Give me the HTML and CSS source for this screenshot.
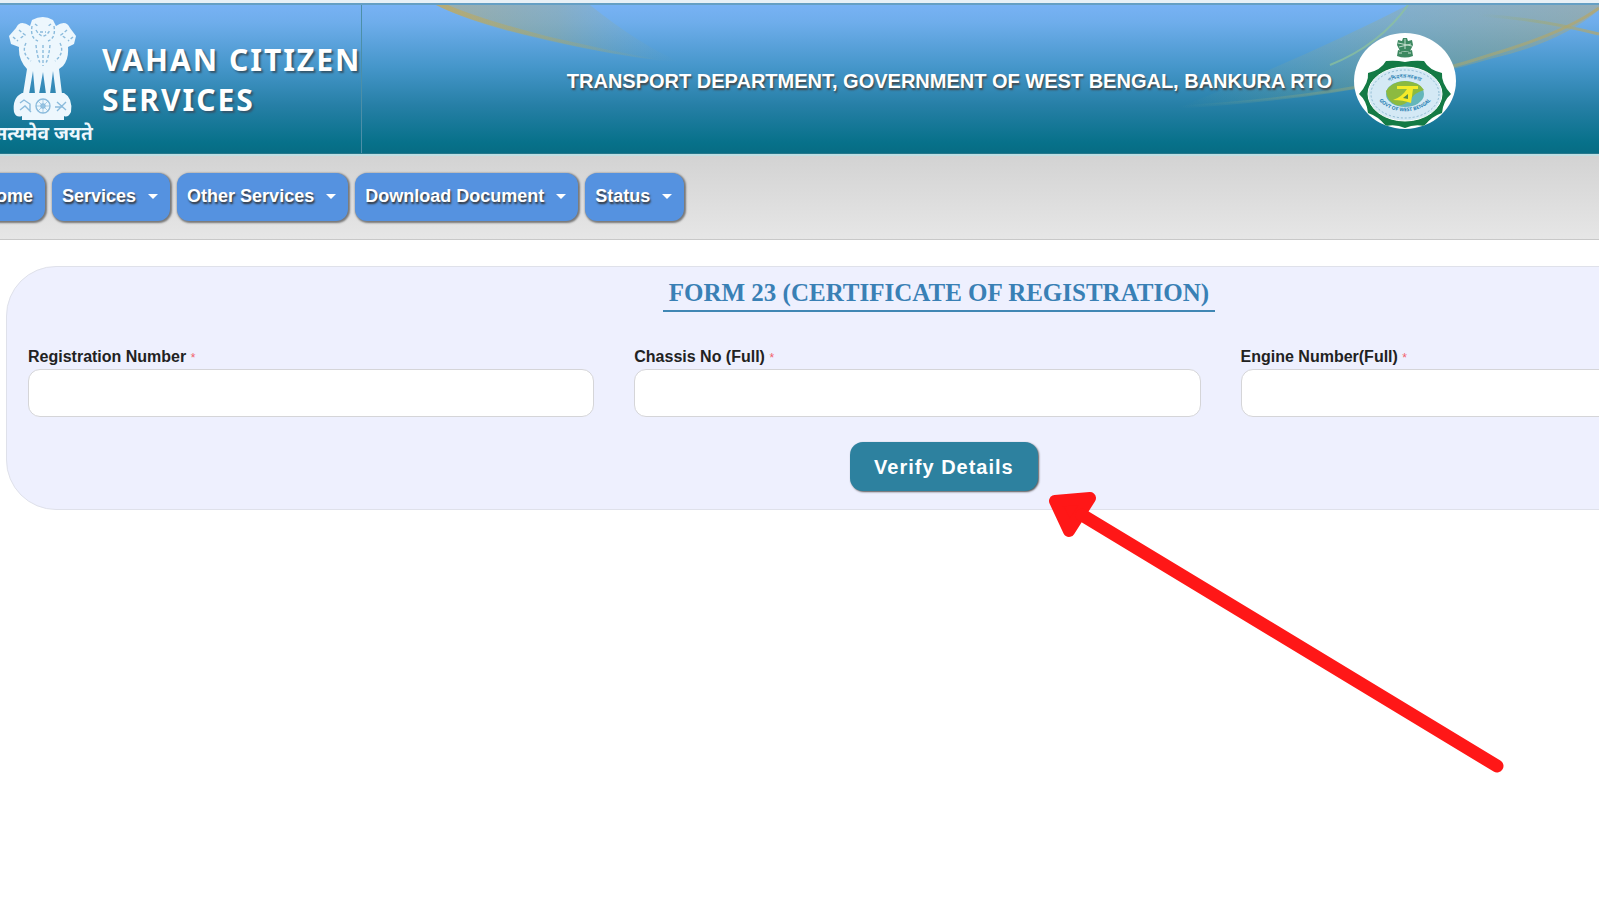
FILE: index.html
```html
<!DOCTYPE html>
<html lang="en">
<head>
<meta charset="utf-8">
<title>Vahan Citizen Services</title>
<link rel="stylesheet" href="styles.css">
</head>
<body>
<header class="banner">
  <svg class="swoosh swoosh-left" width="320" height="80" viewBox="0 0 320 80" aria-hidden="true">
    <defs>
      <linearGradient id="fadeLeft" x1="0" y1="0" x2="1" y2="0">
        <stop offset="0" stop-color="#c9a94f" stop-opacity=".6"/>
        <stop offset=".5" stop-color="#b0a860" stop-opacity=".4"/>
        <stop offset="1" stop-color="#8aa890" stop-opacity="0"/>
      </linearGradient>
    </defs>
    <path d="M16 0 Q56 20 130 36 Q200 52 260 57 Q220 40 170 0Z" fill="url(#fadeLeft)" opacity=".75"/>
    <path d="M16 0 Q50 17 120 33 Q190 50 250 57 Q190 46 130 32 Q60 14 28 0Z" fill="url(#fadeLeft)"/>
  </svg>
  <svg class="swoosh swoosh-right" width="419" height="110" viewBox="0 0 419 110" aria-hidden="true">
    <defs>
      <linearGradient id="fadeRight" x1="0" y1="0" x2="1" y2="0">
        <stop offset="0" stop-color="#8aae8c" stop-opacity="0"/>
        <stop offset=".45" stop-color="#a0aa70" stop-opacity=".45"/>
        <stop offset="1" stop-color="#b8a666" stop-opacity=".7"/>
      </linearGradient>
    </defs>
    <path d="M0 102 Q130 50 228 0 L419 0 V5 Q380 38 310 54 Q190 90 0 102Z" fill="url(#fadeRight)" opacity=".6"/>
    <path d="M0 102 Q190 90 310 50 Q385 28 419 3" fill="none" stroke="url(#fadeRight)" stroke-width="3"/>
    <path d="M150 60 Q200 40 228 0" fill="none" stroke="#8fc39a" stroke-width="2" opacity=".7"/>
    <path d="M300 10 Q360 14 419 29" fill="none" stroke="url(#fadeRight)" stroke-width="3"/>
  </svg>

  <div class="brand">
    <div class="emblem">
      <svg width="70" height="106" viewBox="0 0 70 106" role="img" aria-label="State Emblem of India">
        <g fill="#edf7fd">
          <path d="M24 4 Q35-2 45 4 L48 10 Q58 3 62 12 L68 20 L66 28 L60 31 Q61 43 55 50 L51 53 L54 78 H48 L45 55 L42 78 H38 L35 56 L31 78 H27 L25 55 L21 78 H15 L19 53 Q10 43 11 31 L3 28 L1 20 L8 12 Q12 3 22 10Z"/>
          <path d="M14 77 H56 Q65 82 63 96 Q60 102 56 100 V104 H14 V100 Q8 102 6 96 Q4 82 14 77Z"/>
        </g>
        <g fill="none" stroke="#8bbbdc" stroke-width="1.4">
          <circle cx="35" cy="90" r="7"/><circle cx="35" cy="90" r="2"/>
          <path d="M35 83v14M28 90h14M30 85l10 10M40 85l-10 10" stroke-width=".7"/>
          <path d="M12 87l4-3 6 4v7M12 94l5-4 6 6M49 86l9 8M58 86l-9 9M47 91h8"/>
          <path d="M27 8l4 3M43 8l-4 3M28 14q7 12 14 0M32 16h6M24 10q-2 12 6 15M46 10q2 12-6 15M11 14l6 5-6 4M59 14l-6 5 6 4M5 21l5 4M65 21l-5 4M18 27q-5 10 5 18M52 27q5 10-5 18M28 29q1 11 4 18M42 29q-1 11-4 18M35 29v21" stroke-dasharray="3 2"/>
        </g>
      </svg>
      <span class="motto" lang="hi">सत्यमेव जयते</span>
    </div>
    <h1 class="brand-name">VAHAN CITIZEN SERVICES</h1>
  </div>

  <div class="department">
    <p class="department-name">TRANSPORT DEPARTMENT, GOVERNMENT OF WEST BENGAL, BANKURA RTO</p>
    <svg width="102" height="97" viewBox="0 0 102 97" role="img" aria-label="Government of West Bengal">
      <defs>
        <clipPath id="sealClip"><ellipse cx="51" cy="48" rx="51" ry="48"/></clipPath>
        <path id="sealTop" d="M26 60 A26 21 0 0 1 76 60"/>
        <path id="sealBottom" d="M22 62 A30 22 0 0 0 80 62"/>
      </defs>
      <g clip-path="url(#sealClip)">
        <rect width="102" height="97" fill="#fff"/>
        <path d="M44 7l4 1 1-3h4l1 3 4-1 1 5-3 6H46l-3-6zM44 17q7 3 14 0l1 6q-8 3-16 0z" fill="#3c8860"/>
        <path d="M44 10l14 3M45 14l12-3M51 6v10M45 20h3M54 20h3" stroke="#c2ddcb" fill="none"/>
        <path d="M51 29 Q60 27 70 28 Q75 37 88 40 Q87 50 97 61 Q89 68 88 80 Q78 83 70 93 Q60 91 51 95 Q42 91 32 93 Q24 83 14 80 Q13 68 5 61 Q15 50 14 40 Q27 37 32 28 Q42 27 51 29Z" fill="#147a45"/>
        <ellipse cx="51" cy="61" rx="37" ry="27" fill="#d4e9f5" stroke="#fff" stroke-width="1"/>
        <ellipse cx="51" cy="61" rx="34" ry="24" fill="none" stroke="#8cb8d0" stroke-dasharray="2 2"/>
        <text class="seal-text"><textPath href="#sealTop" startOffset="50%" text-anchor="middle" lang="bn">পশ্চিমবঙ্গ সরকার</textPath></text>
        <text class="seal-text"><textPath href="#sealBottom" startOffset="50%" text-anchor="middle">GOVT OF WEST BENGAL</textPath></text>
        <ellipse cx="51" cy="61" rx="19" ry="13" fill="#64b6ba"/>
        <path d="M32 58 Q37 49 51 48 Q66 49 70 57 Q60 60 57 66 Q49 74 42 72 Q33 68 32 58Z" fill="#8cba40"/>
        <path d="M43 53h21v3h-5l-2 14q-8-3-18-3 9-3 14-11H43z" fill="#f3eb2a"/>
        <path d="M49 65l5-4v5z" fill="#568d45"/>
      </g>
    </svg>
  </div>
</header>

<nav class="menu" aria-label="Main">
  <button class="menu-item" type="button">Home</button>
  <button class="menu-item has-caret" type="button">Services</button>
  <button class="menu-item has-caret" type="button">Other Services</button>
  <button class="menu-item has-caret" type="button">Download Document</button>
  <button class="menu-item has-caret" type="button">Status</button>
</nav>

<main class="content">
  <form class="panel">
    <div class="panel-head">
      <h2 class="panel-title">FORM 23 (CERTIFICATE OF REGISTRATION)</h2>
    </div>
    <div class="fields">
      <div class="field">
        <label for="registration">Registration Number <span class="required">*</span></label>
        <input id="registration" type="text">
      </div>
      <div class="field">
        <label for="chassis">Chassis No (Full) <span class="required">*</span></label>
        <input id="chassis" type="text">
      </div>
      <div class="field">
        <label for="engine">Engine Number(Full) <span class="required">*</span></label>
        <input id="engine" type="text">
      </div>
    </div>
    <div class="actions">
      <button class="verify" type="button">Verify Details</button>
    </div>
  </form>
  <svg class="pointer" width="460" height="290" viewBox="0 0 460 290" aria-hidden="true">
    <path d="M7 12 L42 9 L21 42 Z" class="pointer-head"/>
    <path d="M34 26 L449 277" class="pointer-shaft"/>
  </svg>
</main>
</body>
</html>
```
FILE: styles.css
```css
* {
  box-sizing: border-box;
}

html {
  overflow-x: hidden;
}

body {
  min-height: 100vh;
  margin: 0;
  padding-top: 3px;
  background: #fff;
  color: #222;
  font-family: "Liberation Sans", Arial, sans-serif;
}

h1,
h2,
p {
  margin: 0;
}

/* Banner */
.banner {
  position: relative;
  display: flex;
  border-top: 2px solid #659fc4;
  border-bottom: 1px solid #26788c;
  background: linear-gradient(#78b2f4 0%, #6eadeb 12%, #4596ca 42%, #267fa6 68%, #07718a 93%, #076c84 100%);
  box-shadow: 0 -3px 0 #e8f0f6;
}

.swoosh {
  position: absolute;
  top: 0;
}

.swoosh-left {
  left: 420px;
}

.swoosh-right {
  right: 0;
}

.brand {
  position: relative;
  display: flex;
  flex: none;
  width: 362px;
  height: 148px;
  border-right: 1px solid #4c8fa8;
}

.emblem {
  display: flex;
  flex: none;
  flex-direction: column;
  align-items: center;
  width: 104px;
  margin-left: -9px;
  padding-top: 11px;
}

.motto {
  color: #edf7fd;
  font-family: "Noto Sans", "Noto Sans Devanagari", sans-serif;
  font-size: 19px;
  font-weight: 700;
  line-height: 22px;
  white-space: nowrap;
}

.brand-name {
  flex: none;
  width: 280px;
  margin-left: 7px;
  padding-top: 35px;
  color: #fff;
  font-family: "Noto Sans", "Open Sans", sans-serif;
  font-size: 30px;
  font-weight: 700;
  letter-spacing: 2px;
  line-height: 40px;
  text-shadow: 2px 2px 2px #33566c;
}

.department {
  position: relative;
  display: flex;
  flex: 1;
  align-items: center;
  justify-content: flex-end;
  gap: 22px;
  padding: 4px 143px 0 0;
}

.department-name {
  color: #fff;
  font-size: 20px;
  font-weight: 700;
  line-height: 24px;
  text-shadow: 1px 2px 2px #444;
  white-space: nowrap;
}

.seal-text {
  fill: #2a82b4;
  font-family: "Noto Sans", sans-serif;
  font-size: 5px;
  font-weight: 700;
}

/* Menu */
.menu {
  display: flex;
  gap: 7px;
  margin-left: -27px;
  padding: 17px 0 18px;
  border-top: 2px solid #bfdee2;
  border-bottom: 1px solid #c8c8c8;
  background: linear-gradient(#d3d3d3, #e6e6e6);
}

.menu-item {
  display: flex;
  align-items: center;
  gap: 12px;
  height: 48px;
  padding: 0 12px 2px 10px;
  border: 0;
  border-radius: 12px;
  background: #5592e0;
  box-shadow: 1px 1px 2px 1px #777;
  color: #fff;
  font: 700 18px/24px "Liberation Sans", Arial, sans-serif;
  text-shadow: 1px 2px 2px #333;
  white-space: nowrap;
}

.has-caret::after {
  content: "";
  border: 5px solid transparent;
  border-top-color: #fff;
  border-bottom: 0;
}

/* Form: the three columns run on past the window's right edge */
.content {
  position: relative;
  padding: 26px 0 0 6px;
}

.panel {
  width: 117vw;
  padding: 12px 69px 18px 21px;
  border: 1px solid #dfe1ea;
  border-radius: 50px;
  background: #eef0fe;
}

.panel-head {
  display: flex;
  justify-content: center;
  padding-left: 43px;
}

.panel-title {
  padding: 0 6px 3px;
  border-bottom: 2px solid #4087b4;
  color: #3980b5;
  font-family: Georgia, "Liberation Serif", serif;
  font-size: 25px;
  font-weight: 700;
  line-height: 28px;
  white-space: nowrap;
}

.fields {
  display: grid;
  grid-template-columns: repeat(3, 1fr);
  gap: 40px;
  padding-top: 34px;
}

.field {
  display: flex;
  flex-direction: column;
}

.field label {
  font-size: 16px;
  font-weight: 700;
  line-height: 22px;
}

.required {
  color: #f2606c;
  font-size: 12px;
  font-weight: 400;
}

.field input {
  width: 100%;
  height: 48px;
  padding: 0 12px;
  border: 1px solid #d5d5d8;
  border-radius: 12px;
  background: #fff;
  font: 16px/22px "Liberation Sans", Arial, sans-serif;
}

.actions {
  display: flex;
  justify-content: center;
  padding: 25px 0 0 53px;
}

.verify {
  height: 49px;
  padding: 0 24px;
  border: 0;
  border-radius: 13px;
  background: #2d819f;
  box-shadow: 1px 1px 2px #555;
  color: #fff;
  font: 700 20px/24px "Liberation Sans", Arial, sans-serif;
  letter-spacing: 1px;
}

/* Arrow laid over the form, pointing at the verify button */
.pointer {
  position: absolute;
  top: 249px;
  left: 1048px;
}

.pointer-head {
  fill: #ff1717;
  stroke: #ff1717;
  stroke-width: 12px;
  stroke-linejoin: round;
}

.pointer-shaft {
  fill: none;
  stroke: #ff1717;
  stroke-width: 13px;
  stroke-linecap: round;
}
```
